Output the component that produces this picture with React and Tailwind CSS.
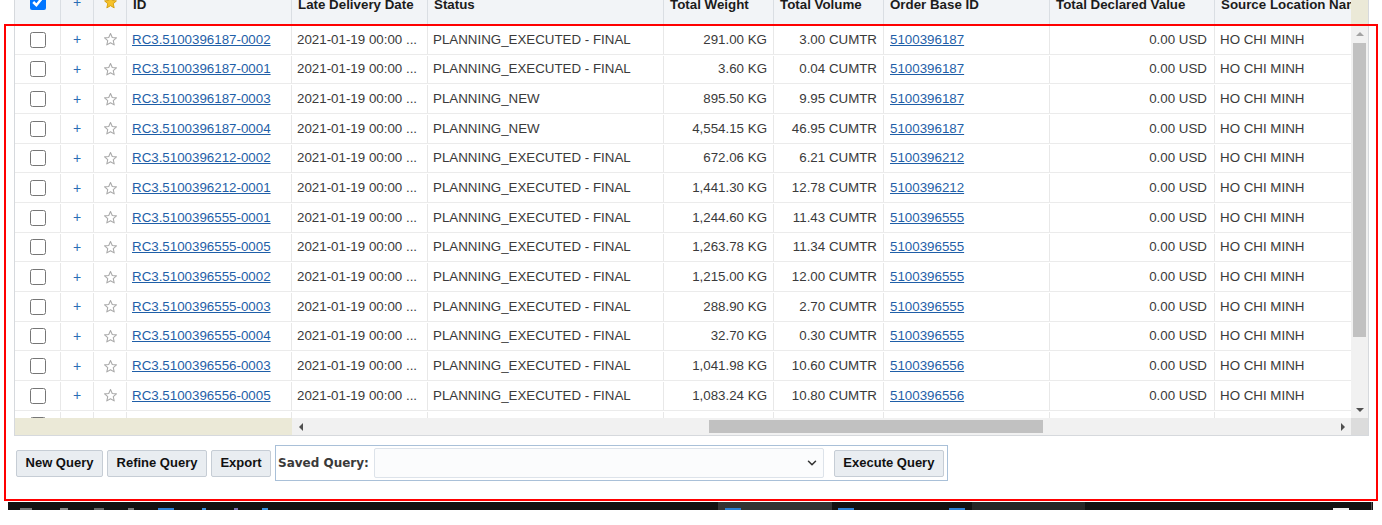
import { ChevronDown } from 'lucide-react';

const rows = [
    ['RC3.5100396187-0002', 'PLANNING_EXECUTED - FINAL', '291.00 KG', '3.00 CUMTR', '5100396187'],
    ['RC3.5100396187-0001', 'PLANNING_EXECUTED - FINAL', '3.60 KG', '0.04 CUMTR', '5100396187'],
    ['RC3.5100396187-0003', 'PLANNING_NEW', '895.50 KG', '9.95 CUMTR', '5100396187'],
    ['RC3.5100396187-0004', 'PLANNING_NEW', '4,554.15 KG', '46.95 CUMTR', '5100396187'],
    ['RC3.5100396212-0002', 'PLANNING_EXECUTED - FINAL', '672.06 KG', '6.21 CUMTR', '5100396212'],
    ['RC3.5100396212-0001', 'PLANNING_EXECUTED - FINAL', '1,441.30 KG', '12.78 CUMTR', '5100396212'],
    ['RC3.5100396555-0001', 'PLANNING_EXECUTED - FINAL', '1,244.60 KG', '11.43 CUMTR', '5100396555'],
    ['RC3.5100396555-0005', 'PLANNING_EXECUTED - FINAL', '1,263.78 KG', '11.34 CUMTR', '5100396555'],
    ['RC3.5100396555-0002', 'PLANNING_EXECUTED - FINAL', '1,215.00 KG', '12.00 CUMTR', '5100396555'],
    ['RC3.5100396555-0003', 'PLANNING_EXECUTED - FINAL', '288.90 KG', '2.70 CUMTR', '5100396555'],
    ['RC3.5100396555-0004', 'PLANNING_EXECUTED - FINAL', '32.70 KG', '0.30 CUMTR', '5100396555'],
    ['RC3.5100396556-0003', 'PLANNING_EXECUTED - FINAL', '1,041.98 KG', '10.60 CUMTR', '5100396556'],
    ['RC3.5100396556-0005', 'PLANNING_EXECUTED - FINAL', '1,083.24 KG', '10.80 CUMTR', '5100396556'],
    ['RC3.5100396556-0001', 'PLANNING_EXECUTED - FINAL', '1,102.50 KG', '10.95 CUMTR', '5100396556'],
];

const STAR = '12,2.5 14.8,8.7 21.5,9.4 16.4,13.9 17.9,20.6 12,17.1 6.1,20.6 7.6,13.9 2.5,9.4 9.2,8.7';

function Star({ filled }) {
    return (
        <svg width="15" height="15" viewBox="0 0 24 24">
            <polygon
                points={STAR}
                fill={filled ? '#f6c22c' : 'none'}
                stroke={filled ? '#d39b05' : '#a9a9a9'}
                strokeWidth={filled ? 1.4 : 1.7}
                strokeLinejoin="round"
            />
        </svg>
    );
}

function HeaderRow() {
    const th = 'shrink-0 border-r border-[#dadee3] pt-[7px] pl-[6px] font-bold text-[13.33px] leading-4 text-[#1c1c1c] whitespace-nowrap overflow-hidden';
    return (
        <div className="flex h-[35px] border-b border-[#d3d8de] bg-[#f2f4f7]">
            <div className="w-[46px] shrink-0 border-r border-[#dadee3] flex justify-center pt-[4px]">
                <input type="checkbox" defaultChecked className="w-4 h-4 m-0" />
            </div>
            <div className="w-[33px] shrink-0 border-r border-[#dadee3] flex justify-center pt-[4px] text-[14px] leading-4 text-[#2a6db5]">+</div>
            <div className="w-[33px] shrink-0 border-r border-[#dadee3] flex justify-center pt-[5px]">
                <Star filled />
            </div>
            <div className={`w-[165px] ${th}`}>ID</div>
            <div className={`w-[136px] ${th}`}>Late Delivery Date</div>
            <div className={`w-[236px] ${th}`}>Status</div>
            <div className={`w-[110px] ${th}`}>Total Weight</div>
            <div className={`w-[110px] ${th}`}>Total Volume</div>
            <div className={`w-[166px] ${th}`}>Order Base ID</div>
            <div className={`w-[165px] ${th}`}>Total Declared Value</div>
            <div className="w-[136px] shrink-0 pt-[7px] pl-[6px] font-bold text-[13.33px] leading-4 text-[#1c1c1c] whitespace-nowrap overflow-hidden">Source Location Name</div>
            <div className="w-[17px] shrink-0 bg-[#ebe9d7]" />
        </div>
    );
}

function BodyRow({ r }) {
    const td = 'shrink-0 border-r border-[#e8e8e8] flex items-center whitespace-nowrap overflow-hidden';
    return (
        <div className="flex h-[29.67px] shrink-0 pt-[1px] border-b border-[#ebebeb] text-[13.33px] text-[#3a3a3a]">
            <div className={`w-[46px] justify-center ${td}`}>
                <input type="checkbox" className="w-4 h-4 m-0" />
            </div>
            <div className={`w-[33px] justify-center text-[14px] text-[#2a6db5] ${td}`}>+</div>
            <div className={`w-[33px] justify-center ${td}`}>
                <Star />
            </div>
            <div className={`w-[165px] pl-[5px] ${td}`}>
                <a href="#" className="text-[#1f5fa8] underline">{r[0]}</a>
            </div>
            <div className={`w-[136px] pl-[5px] ${td}`}>2021-01-19 00:00 ...</div>
            <div className={`w-[236px] pl-[5px] ${td}`}>{r[1]}</div>
            <div className={`w-[110px] justify-end pr-[6px] ${td}`}>{r[2]}</div>
            <div className={`w-[110px] justify-end pr-[6px] ${td}`}>{r[3]}</div>
            <div className={`w-[166px] pl-[6px] ${td}`}>
                <a href="#" className="text-[#1f5fa8] underline">{r[4]}</a>
            </div>
            <div className={`w-[165px] justify-end pr-[7px] ${td}`}>0.00 USD</div>
            <div className="w-[136px] shrink-0 pl-[5px] flex items-center whitespace-nowrap overflow-hidden">HO CHI MINH</div>
        </div>
    );
}

function Btn({ children, w }) {
    return (
        <button className={`${w} h-[27px] shrink-0 rounded-[2px] border border-[#c6cdd5] bg-[#e9edf1] text-[13px] font-bold text-[#111] flex items-center justify-center`}>
            {children}
        </button>
    );
}

export default function App() {
    return (
        <div className="relative w-[1382px] h-[525px] overflow-hidden bg-white" style={{ fontFamily: '"Liberation Sans", Arial, sans-serif' }}>
            <div className="-mt-[10px]">
                {/* grid panel */}
                <div className="ml-[14px] w-[1355px] border-l border-r border-b border-[#d6d9dd]">
                    <HeaderRow />
                    <div className="flex h-[393px]">
                        <div className="w-[1336px] flex flex-col overflow-hidden">
                            {rows.map((r) => (
                                <BodyRow key={r[0]} r={r} />
                            ))}
                        </div>
                        {/* vertical scrollbar */}
                        <div className="w-[17px] shrink-0 bg-[#f1f1f1] flex flex-col items-center">
                            <div className="h-[17px] flex items-center justify-center">
                                <div className="w-0 h-0 border-l-[4px] border-r-[4px] border-b-[4px] border-l-transparent border-r-transparent border-b-[#a3a3a3]" />
                            </div>
                            <div className="mt-[1px] w-[13px] h-[294px] bg-[#c1c1c1]" />
                            <div className="flex-1" />
                            <div className="h-[17px] flex items-center justify-center">
                                <div className="w-0 h-0 border-l-[4px] border-r-[4px] border-t-[4px] border-l-transparent border-r-transparent border-t-[#505050]" />
                            </div>
                        </div>
                    </div>
                    {/* horizontal scrollbar */}
                    <div className="flex h-[17px]">
                        <div className="w-[277px] shrink-0 bg-[#ebe9d7]" />
                        <div className="w-[1059px] shrink-0 bg-[#f1f1f1] flex items-center">
                            <div className="w-[17px] h-[17px] flex items-center justify-center">
                                <div className="w-0 h-0 border-t-[4px] border-b-[4px] border-r-[4px] border-t-transparent border-b-transparent border-r-[#505050]" />
                            </div>
                            <div className="ml-[400px] w-[334px] h-[13px] bg-[#c1c1c1]" />
                            <div className="flex-1" />
                            <div className="w-[17px] h-[17px] flex items-center justify-center">
                                <div className="w-0 h-0 border-t-[4px] border-b-[4px] border-l-[4px] border-t-transparent border-b-transparent border-l-[#505050]" />
                            </div>
                        </div>
                        <div className="w-[17px] shrink-0 bg-[#dcdcdc]" />
                    </div>
                </div>

                {/* query toolbar */}
                <div className="mt-[9px] ml-[16px] h-[36px] flex items-center gap-[4px]">
                    <Btn w="w-[87px]">New Query</Btn>
                    <Btn w="w-[100px]">Refine Query</Btn>
                    <Btn w="w-[60px]">Export</Btn>
                    <div className="w-[673px] h-[36px] border border-[#a9c0d8] flex items-center pl-[2px]">
                        <span className="text-[12px] font-bold text-[#3a3a3a] whitespace-nowrap" style={{ fontFamily: '"DejaVu Sans", Verdana, sans-serif' }}>
                            Saved Query:
                        </span>
                        <div className="ml-[5px] w-[450px] h-[30px] rounded-[2px] border border-[#dde3ea] bg-[#fbfcfd] flex items-center justify-end pr-[4px]">
                            <ChevronDown size={14} strokeWidth={2.6} className="text-[#333]" />
                        </div>
                        <div className="ml-[10px]">
                            <Btn w="w-[110px]">Execute Query</Btn>
                        </div>
                    </div>
                </div>

                {/* taskbar edge */}
                <div className="mt-[21px] ml-[8px] w-[1365px] h-[8px] bg-[#111] flex items-end">
                    <div className="w-[710px] h-full flex items-end">
                        <div className="ml-[12px] w-[12px] h-[2px] bg-[#777]" />
                        <div className="ml-[28px] w-[8px] h-[2px] bg-[#888]" />
                        <div className="ml-[26px] w-[10px] h-[2px] bg-[#666]" />
                        <div className="ml-[24px] w-[6px] h-[2px] bg-[#777]" />
                        <div className="ml-[24px] w-[16px] h-[2px] bg-[#2d7fd3]" />
                        <div className="ml-[28px] w-[4px] h-[2px] bg-[#3a8fdc]" />
                        <div className="ml-[28px] w-[4px] h-[2px] bg-[#7a6fb0]" />
                        <div className="ml-[24px] w-[6px] h-[2px] bg-[#3a8fdc]" />
                    </div>
                    <div className="w-[114px] h-full bg-[#333] flex items-end">
                        <div className="ml-[7px] w-[16px] h-[2px] bg-[#2d7fd3]" />
                    </div>
                    <div className="w-[140px] h-full flex items-end">
                        <div className="ml-[6px] w-[16px] h-[2px] bg-[#2d7fd3]" />
                    </div>
                    <div className="w-[113px] h-full bg-[#262626] flex items-end">
                        <div className="ml-[-23px] w-[16px] h-[2px] bg-[#2d7fd3]" />
                    </div>
                    <div className="flex-1 h-full flex items-end justify-end">
                        <div className="mr-[22px] w-[16px] h-[2px] bg-[#eee]" />
                        <div className="mr-[1px] w-[1px] h-full bg-[#555]" />
                    </div>
                </div>
            </div>

            {/* red annotation frame */}
            <div className="absolute left-[4px] top-[24px] w-[1374px] h-[477px] border-2 border-[#ff0000] pointer-events-none" />
        </div>
    );
}
